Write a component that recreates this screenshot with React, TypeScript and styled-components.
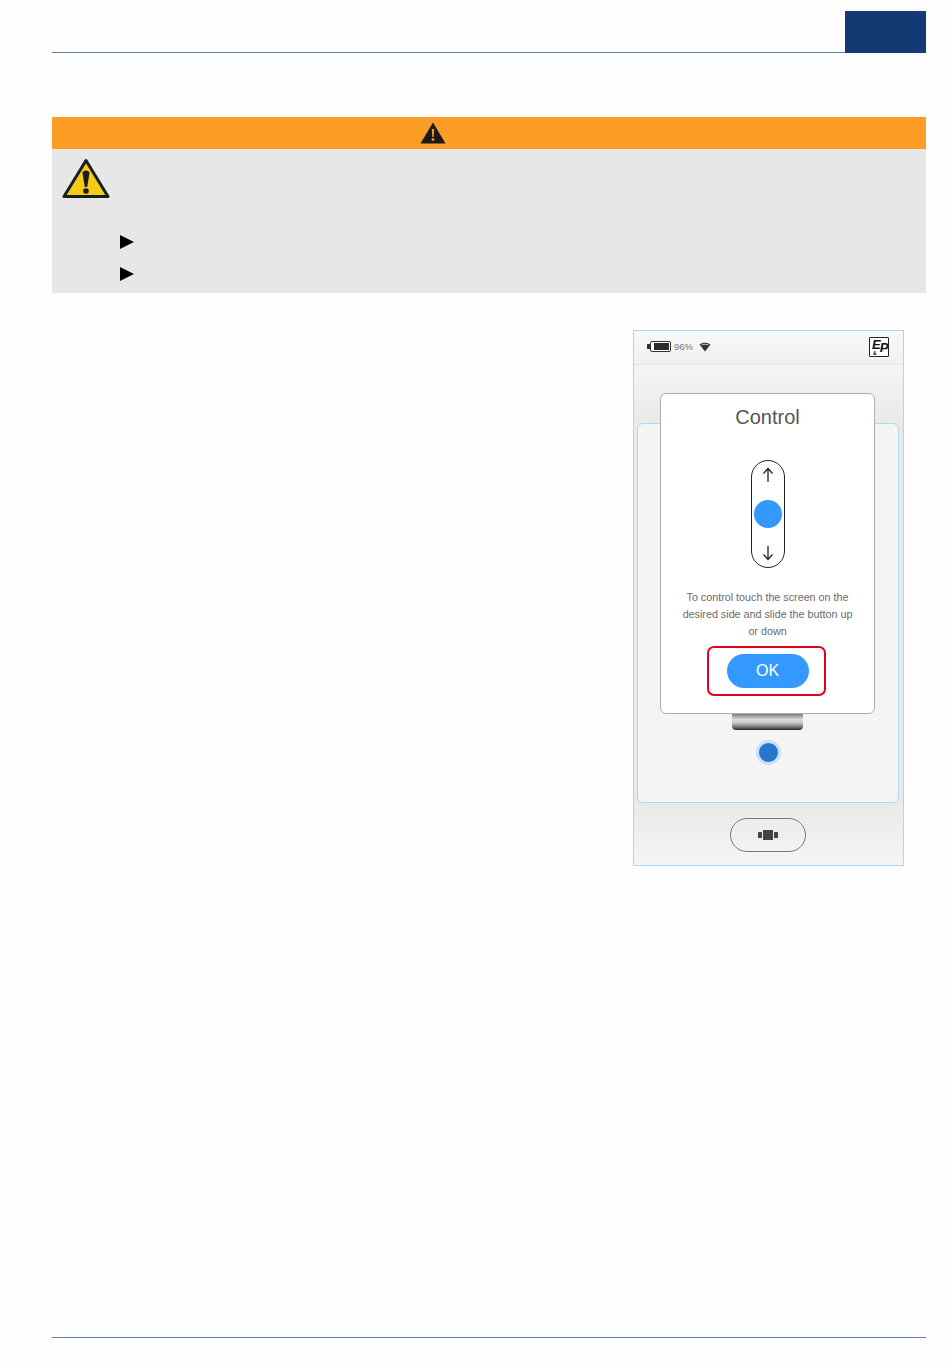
import styled, { createGlobalStyle } from "styled-components";

const GlobalStyle = createGlobalStyle`
  html, body {
    margin: 0;
    padding: 0;
    background: #fefefe;
    font-family: "Liberation Sans", Arial, sans-serif;
  }
`;

const Page = styled.div`
  width: 950px;
  height: 1369px;
  padding: 11px 24px 0 52px;
  box-sizing: border-box;
  display: flex;
  flex-direction: column;
  overflow: hidden;
`;

const Header = styled.header`
  height: 42px;
  display: flex;
  align-items: flex-end;
`;

const HeaderLine = styled.div`
  flex: 1;
  height: 1px;
  background: #5f7fa9;
`;

const HeaderTab = styled.div`
  width: 81px;
  height: 42px;
  background: #133a72;
`;

const WarningBox = styled.section`
  margin-top: 64px;
`;

const WarningBand = styled.div`
  height: 32px;
  background: #fb9d24;
  display: flex;
  justify-content: center;
  align-items: center;
  padding-right: 112px;
`;

const WarningBody = styled.div`
  height: 144px;
  background: #e7e7e7;
  padding: 9px 0 0 10px;
  box-sizing: border-box;
`;

const BulletList = styled.div`
  margin: 31px 0 0 58px;
  display: flex;
  flex-direction: column;
  gap: 18px;
`;

const Bullet = styled.div`
  width: 0;
  height: 0;
  border-left: 14px solid #000;
  border-top: 7px solid transparent;
  border-bottom: 7px solid transparent;
`;

const Content = styled.div`
  margin-top: 37px;
  display: flex;
  justify-content: flex-end;
  padding-right: 22px;
`;

const Phone = styled.div`
  position: relative;
  width: 271px;
  height: 536px;
  box-sizing: border-box;
  border: 1px solid #a5d8f5;
  display: flex;
  flex-direction: column;
  background: #f2f2f2;
`;

const StatusBar = styled.div`
  height: 34px;
  box-sizing: border-box;
  padding: 0 14px 2px 13px;
  display: flex;
  align-items: center;
  background: linear-gradient(#f8f8f8, #f1f1f1);
  border-bottom: 1px solid #e3e3e3;
`;

const Battery = styled.div`
  position: relative;
  width: 21px;
  height: 11px;
  margin-left: 3px;
  box-sizing: border-box;
  border: 1px solid #333;
  border-radius: 2px;
  padding: 1px 1px 1px 3px;
  background: #fff;
  &::before {
    content: "";
    position: absolute;
    left: -4px;
    top: 2px;
    width: 3px;
    height: 5px;
    background: #333;
  }
`;

const BatteryFill = styled.div`
  height: 100%;
  background: #2b2b2b;
`;

const BatteryText = styled.span`
  margin-left: 3px;
  font-size: 9.5px;
  color: #777;
`;

const WifiIcon = styled.svg`
  margin-left: 6px;
`;

const Logo = styled.div`
  position: relative;
  margin-left: auto;
  width: 20px;
  height: 20px;
  box-sizing: border-box;
  border: 1px solid #222;
  border-radius: 1px;
  background: #fff;
  color: #111;
  font-size: 13px;
  line-height: 14px;
  font-weight: 700;
  font-style: italic;
  padding-left: 2px;
`;

const LogoP = styled.span`
  position: relative;
  top: 3px;
  left: -1px;
`;

const LogoAmp = styled.span`
  position: absolute;
  left: 3px;
  bottom: 0;
  font-size: 5px;
  line-height: 5px;
  font-style: normal;
`;

const Stage = styled.div`
  flex: 1;
  padding: 58px 4px 0 3px;
  background: linear-gradient(#f5f5f5, #e9e9e9 58px);
`;

const Card = styled.div`
  height: 380px;
  box-sizing: border-box;
  border: 1px solid #a9dcf5;
  border-radius: 6px;
  background: #f4f4f4;
  padding-top: 290px;
  display: flex;
  flex-direction: column;
  align-items: center;
`;

const Device = styled.div`
  width: 71px;
  height: 16px;
  margin-right: 2px;
  border-radius: 0 0 4px 4px;
  background: linear-gradient(#7c7c7c, #dcdcdc 35%, #c6c6c6 55%, #8a8a8a 75%, #262626);
`;

const Dot = styled.div`
  margin-top: 10px;
  width: 19px;
  height: 19px;
  border-radius: 50%;
  background: #2677cc;
  border: 3px solid #c9dffc;
`;

const BottomBar = styled.div`
  height: 62px;
  display: flex;
  justify-content: center;
  padding: 15px 2px 0 0;
  box-sizing: border-box;
  background: linear-gradient(#e9e9e9, #f5f5f5);
`;

const ViewButton = styled.div`
  width: 76px;
  height: 34px;
  box-sizing: border-box;
  border: 1px solid #777;
  border-radius: 17px;
  display: flex;
  align-items: center;
  justify-content: center;
`;

const Modal = styled.div`
  position: absolute;
  left: 26px;
  top: 62px;
  width: 215px;
  height: 321px;
  box-sizing: border-box;
  background: #fff;
  border: 1px solid #aeaeae;
  border-radius: 6px;
  display: flex;
  flex-direction: column;
  align-items: center;
`;

const ModalTitle = styled.div`
  margin-top: 12px;
  font-size: 20px;
  line-height: 23px;
  color: #555;
`;

const SliderTrack = styled.div`
  margin-top: 31px;
  width: 34px;
  height: 108px;
  box-sizing: border-box;
  border: 1px solid #222;
  border-radius: 17px;
  display: flex;
  flex-direction: column;
  align-items: center;
  justify-content: space-between;
  padding: 6px 0 6px;
`;

const SliderKnob = styled.div`
  width: 28px;
  height: 28px;
  border-radius: 50%;
  background: #3399ff;
`;

const ModalText = styled.p`
  margin: 21px 0 0;
  width: 175px;
  font-size: 10.75px;
  line-height: 17px;
  color: #6a6a6a;
  text-align: center;
`;

const Highlight = styled.div`
  margin: 6px 2px 0 0;
  width: 119px;
  height: 50px;
  box-sizing: border-box;
  border: 2px solid #e2001a;
  border-radius: 7px;
  padding-left: 2px;
  display: flex;
  align-items: center;
  justify-content: center;
`;

const OkButton = styled.div`
  width: 82px;
  height: 34px;
  border-radius: 17px;
  background: #3399ff;
  color: #fff;
  font-size: 16px;
  line-height: 34px;
  text-align: center;
`;

const FooterLine = styled.div`
  margin-top: auto;
  margin-bottom: 31px;
  height: 1px;
  background: #5f7fa9;
`;

const Arrow = ({ down }: { down?: boolean }) => (
  <svg width="12" height="16" viewBox="0 0 12 16" fill="none" stroke="#222" strokeWidth="1.3">
    {down ? (
      <path d="M6 1v13M1.500 9.500L6 14.500l4.500-5" />
    ) : (
      <path d="M6 15V2M1.500 6.500L6 1.500l4.500 5" />
    )}
  </svg>
);

export default function App() {
  return (
    <Page>
      <GlobalStyle />
      <Header>
        <HeaderLine />
        <HeaderTab />
      </Header>

      <WarningBox>
        <WarningBand>
          <svg width="26" height="22" viewBox="0 0 26 22">
            <path d="M13 0.500L25.500 21.500H0.500z" fill="#1a1a1a" />
            <path d="M11.800 7h2.400l-.5 8h-1.400z" fill="#fb9d24" />
            <circle cx="13" cy="17.600" r="1.400" fill="#fb9d24" />
          </svg>
        </WarningBand>
        <WarningBody>
          <svg width="48" height="42" viewBox="0 0 48 42">
            <path
              d="M24 2.500L46 38.500H2z"
              fill="#f6cb16"
              stroke="#15201c"
              strokeWidth="3"
              strokeLinejoin="round"
            />
            <path d="M20.500 15c0-3.500 7-3.500 7 0L25.200 29h-2.400z" fill="#15201c" />
            <circle cx="24" cy="33" r="2.800" fill="#15201c" />
          </svg>
          <BulletList>
            <Bullet />
            <Bullet />
          </BulletList>
        </WarningBody>
      </WarningBox>

      <Content>
        <Phone>
          <StatusBar>
            <Battery>
              <BatteryFill />
            </Battery>
            <BatteryText>96%</BatteryText>
            <WifiIcon width="12" height="10" viewBox="0 0 12 10">
              <path d="M0.500 2.500C3.500 0 8.500 0 11.500 2.500L6 9.500z" fill="#333" />
              <path d="M2.500 3C4.500 2 7.500 2 9.500 3" stroke="#eee" strokeWidth="0.8" fill="none" />
            </WifiIcon>
            <Logo>
              E<LogoP>P</LogoP>
              <LogoAmp>&amp;</LogoAmp>
            </Logo>
          </StatusBar>

          <Stage>
            <Card>
              <Device />
              <Dot />
            </Card>
          </Stage>

          <BottomBar>
            <ViewButton>
              <svg width="20" height="10" viewBox="0 0 20 10" fill="#444">
                <rect x="0" y="2" width="4" height="6" />
                <rect x="5" y="0" width="10" height="10" />
                <rect x="16" y="2" width="4" height="6" />
              </svg>
            </ViewButton>
          </BottomBar>

          <Modal>
            <ModalTitle>Control</ModalTitle>
            <SliderTrack>
              <Arrow />
              <SliderKnob />
              <Arrow down />
            </SliderTrack>
            <ModalText>
              To control touch the screen on the desired side and slide the button up or down
            </ModalText>
            <Highlight>
              <OkButton>OK</OkButton>
            </Highlight>
          </Modal>
        </Phone>
      </Content>

      <FooterLine />
    </Page>
  );
}
